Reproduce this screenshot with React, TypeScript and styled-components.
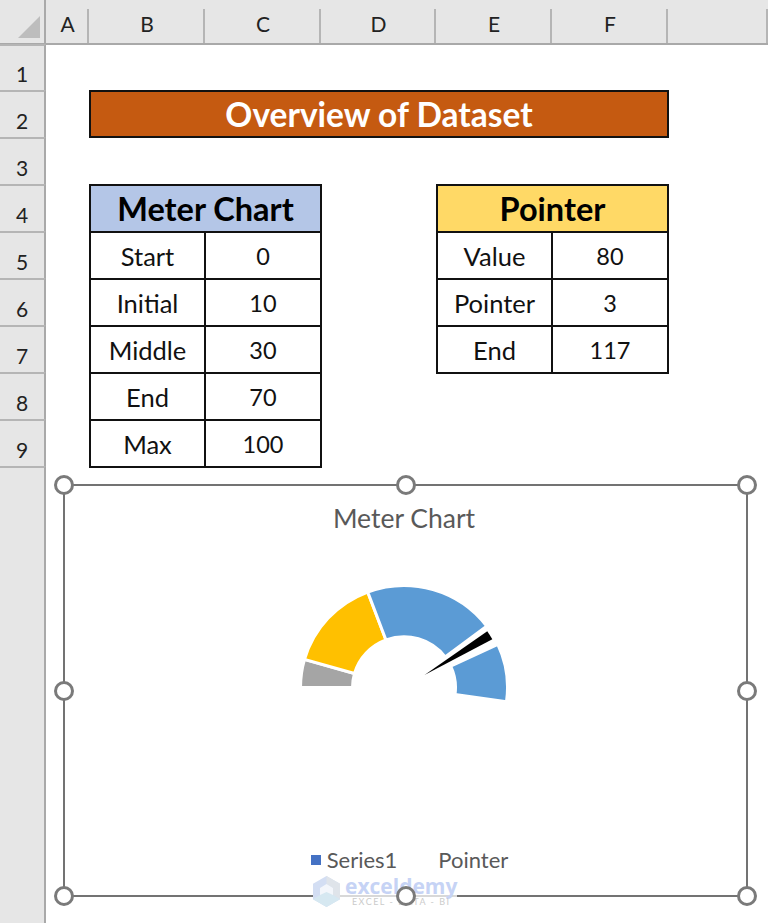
import React from "react";
import styled, { createGlobalStyle } from "styled-components";

const GlobalStyle = createGlobalStyle`
  html, body {
    margin: 0;
    padding: 0;
    background: #fff;
  }
`;

const columns = ["A", "B", "C", "D", "E", "F"];
const rows = [1, 2, 3, 4, 5, 6, 7, 8, 9];

const meterData = [
  ["Start", "0"],
  ["Initial", "10"],
  ["Middle", "30"],
  ["End", "70"],
  ["Max", "100"],
];

const pointerData = [
  ["Value", "80"],
  ["Pointer", "3"],
  ["End", "117"],
];

// gauge angles, degrees clockwise from the left side of the ring
// the ring in the picture is a touch wider than tall, hence SQUASH
const CX = 107;
const CY = 107.5;
const R = 103.5;
const r = 51.5;
const SQUASH = 0.985;

function point(angle: number, radius: number) {
  const a = (angle * Math.PI) / 180;
  return `${(CX - Math.cos(a) * radius).toFixed(2)} ${(CY - Math.sin(a) * radius * SQUASH).toFixed(2)}`;
}

function slice(from: number, to: number) {
  const outer = `${R} ${R * SQUASH}`;
  const inner = `${r} ${r * SQUASH}`;
  return `M${point(from, r)} L${point(from, R)} A${outer} 0 0 1 ${point(to, R)} L${point(to, r)} A${inner} 0 0 0 ${point(from, r)} Z`;
}

const slices = [
  { from: 0, to: 16, color: "#a5a5a5" },
  { from: 16, to: 69.5, color: "#ffc000" },
  { from: 69.5, to: 143, color: "#5b9bd5" },
  { from: 155, to: 188, color: "#5b9bd5" },
];

function Gauge() {
  return (
    <GaugeSvg viewBox="0 0 217 130" width="217" height="130">
      {slices.map((s) => (
        <path key={s.from} d={slice(s.from, s.to)} fill={s.color} stroke="#fff" strokeWidth="3" />
      ))}
      <path d={`M127.5 95 L${point(145.5, 101)} A101 101 0 0 1 ${point(151, 101)} Z`} fill="#000" />
    </GaugeSvg>
  );
}

function DataTable({
  title,
  data,
  $head,
  $col,
  $row,
}: {
  title: string;
  data: string[][];
  $head: string;
  $col: string;
  $row: string;
}) {
  return (
    <Table $col={$col} $row={$row}>
      <TableHead $head={$head}>{title}</TableHead>
      {data.map(([label, value]) => (
        <React.Fragment key={label}>
          <TableCell>{label}</TableCell>
          <ValueCell>{value}</ValueCell>
        </React.Fragment>
      ))}
    </Table>
  );
}

export default function App() {
  return (
    <Sheet>
      <GlobalStyle />
      <Corner>
        <Triangle />
      </Corner>
      {columns.map((c) => (
        <ColHeader key={c}>{c}</ColHeader>
      ))}
      <ColHeader />
      {rows.map((n) => (
        <RowHeader key={n} $row={n + 1}>
          {n}
        </RowHeader>
      ))}
      <RowRest />

      <Banner>Overview of Dataset</Banner>
      <DataTable title="Meter Chart" data={meterData} $head="#b4c6e7" $col="3 / 5" $row="5 / 11" />
      <DataTable title="Pointer" data={pointerData} $head="#ffd966" $col="6 / 8" $row="5 / 9" />

      <ChartFrame>
        <ChartTitle>Meter Chart</ChartTitle>
        <Gauge />
        <Legend>
          <LegendItem>
            <Swatch />
            Series1
          </LegendItem>
          <LegendItem>Pointer</LegendItem>
        </Legend>

        <Watermark>
          <svg width="27" height="31" viewBox="0 0 27 31">
            <path d="M13.5 0 L27 7.75 V23.25 L13.5 31 L0 23.25 V7.75 Z" fill="#d3def3" />
            <path d="M13.5 0 L27 7.75 V23.25 L20 19 V12 L13.5 8 Z" fill="#dfe4ea" />
            <path d="M13.5 8 L20 12 V19 L13.5 23 L7 19 V12 Z" fill="#f3f6fb" />
            <path d="M13.5 16 L20 19 L27 23.25 L13.5 31 L0 23.25 L7 19 Z" fill="#d6e8f1" />
          </svg>
          <WatermarkText>
            <WatermarkName>exceldemy</WatermarkName>
            <WatermarkTag>EXCEL - DATA - BI</WatermarkTag>
          </WatermarkText>
        </Watermark>

        <Handle $x={0} $y={0} />
        <Handle $x={50} $y={0} />
        <Handle $x={100} $y={0} />
        <Handle $x={0} $y={50} />
        <Handle $x={100} $y={50} />
        <Handle $x={0} $y={100} />
        <Handle $x={50} $y={100} />
        <Handle $x={100} $y={100} />
      </ChartFrame>
    </Sheet>
  );
}

const Sheet = styled.div`
  position: relative;
  width: 768px;
  height: 923px;
  overflow: hidden;
  display: grid;
  grid-template-columns: 46px 43px 116px 116px 115px 116px 116px 1fr;
  grid-template-rows: 45px 46px repeat(8, 47px) 1fr;
  background: #fff;
  color: #111;
  font-family: Lato, "Liberation Sans", sans-serif;
`;

const Corner = styled.div`
  grid-column: 1;
  grid-row: 1;
  background: #e6e6e6;
  border-right: 2px solid #a9a9a9;
  border-bottom: 2px solid #a9a9a9;
  display: flex;
  align-items: flex-end;
  justify-content: flex-end;
  padding: 0 4px 5px 0;
`;

const Triangle = styled.div`
  width: 22px;
  height: 22px;
  background: #bdbdbd;
  clip-path: polygon(100% 0, 100% 100%, 0 100%);
`;

const ColHeader = styled.div`
  grid-row: 1;
  background-color: #e6e6e6;
  background-image: linear-gradient(#b5b5b5, #b5b5b5);
  background-size: 2px 34px;
  background-position: right 9px;
  background-repeat: no-repeat;
  border-bottom: 2px solid #a9a9a9;
  display: flex;
  align-items: flex-end;
  justify-content: center;
  padding-bottom: 6px;
  font-size: 21px;
  line-height: 26px;
  color: #222;
`;

const RowHeader = styled.div<{ $row: number }>`
  grid-column: 1;
  grid-row: ${(p) => p.$row};
  margin-top: -1px;
  background: #e6e6e6;
  border-right: 2px solid #a9a9a9;
  border-top: 2px solid #b5b5b5;
  display: flex;
  align-items: flex-end;
  justify-content: center;
  padding-bottom: 4px;
  font-size: 21px;
  line-height: 26px;
  color: #222;
`;

const RowRest = styled.div`
  grid-column: 1;
  grid-row: 11;
  margin-top: -1px;
  background: #e6e6e6;
  border-right: 2px solid #a9a9a9;
  border-top: 2px solid #b5b5b5;
`;

const Banner = styled.div`
  grid-column: 3 / 8;
  grid-row: 3;
  margin: -1px -1px 0 0;
  border: 2px solid #111;
  background: #c55a11;
  color: #fff;
  font-size: 33.5px;
  font-weight: 700;
  display: flex;
  align-items: center;
  justify-content: center;
`;

const Table = styled.div<{ $col: string; $row: string }>`
  grid-column: ${(p) => p.$col};
  grid-row: ${(p) => p.$row};
  margin: -1px -1px -1px 0;
  display: grid;
  grid-template-columns: 113px 1fr;
  grid-auto-rows: 45px;
  gap: 2px;
  padding: 2px;
  background: #111;
`;

const TableHead = styled.div<{ $head: string }>`
  grid-column: 1 / 3;
  background: ${(p) => p.$head};
  font-size: 32.5px;
  font-weight: 700;
  color: #000;
  display: flex;
  align-items: center;
  justify-content: center;
`;

const TableCell = styled.div`
  background: #fff;
  font-size: 25.5px;
  display: flex;
  align-items: center;
  justify-content: center;
`;

const ValueCell = styled(TableCell)`
  font-size: 23.5px;
`;

const ChartFrame = styled.div`
  position: absolute;
  left: 64px;
  top: 485px;
  width: 683px;
  height: 411px;
  outline: 2px solid #737373;
  outline-offset: -1px;
  background: #fff;
  display: flex;
  flex-direction: column;
  align-items: center;
  color: #595959;
`;

const ChartTitle = styled.div`
  margin: 18px 3px 0 0;
  font-size: 26.5px;
  line-height: 30px;
`;

const GaugeSvg = styled.svg`
  margin-top: 47px;
  display: block;
`;

const Legend = styled.div`
  margin-top: auto;
  margin-bottom: 23px;
  margin-left: 8px;
  display: flex;
  gap: 41px;
  font-size: 22px;
  line-height: 26px;
`;

const LegendItem = styled.div`
  display: flex;
  align-items: center;
  gap: 6px;
`;

const Swatch = styled.span`
  width: 10px;
  height: 10px;
  background: #4472c4;
`;

const Watermark = styled.div`
  position: absolute;
  left: 249px;
  top: 390px;
  display: flex;
  align-items: center;
  gap: 5px;
  background: rgba(255, 255, 255, 0.72);
`;

const WatermarkText = styled.div`
  display: flex;
  flex-direction: column;
  align-items: center;
`;

const WatermarkName = styled.div`
  font-family: "Open Sans", sans-serif;
  font-size: 21px;
  line-height: 22px;
  font-weight: 700;
  color: #c6d3f5;
`;

const WatermarkTag = styled.div`
  font-size: 9px;
  line-height: 10px;
  letter-spacing: 1.5px;
  color: #cbcbcb;
`;

const Handle = styled.span<{ $x: number; $y: number }>`
  position: absolute;
  left: ${(p) => p.$x}%;
  top: ${(p) => p.$y}%;
  width: 20px;
  height: 20px;
  box-sizing: border-box;
  transform: translate(-50%, -50%);
  border: 3px solid #7a7a7a;
  border-radius: 50%;
  background: #fff;
`;
